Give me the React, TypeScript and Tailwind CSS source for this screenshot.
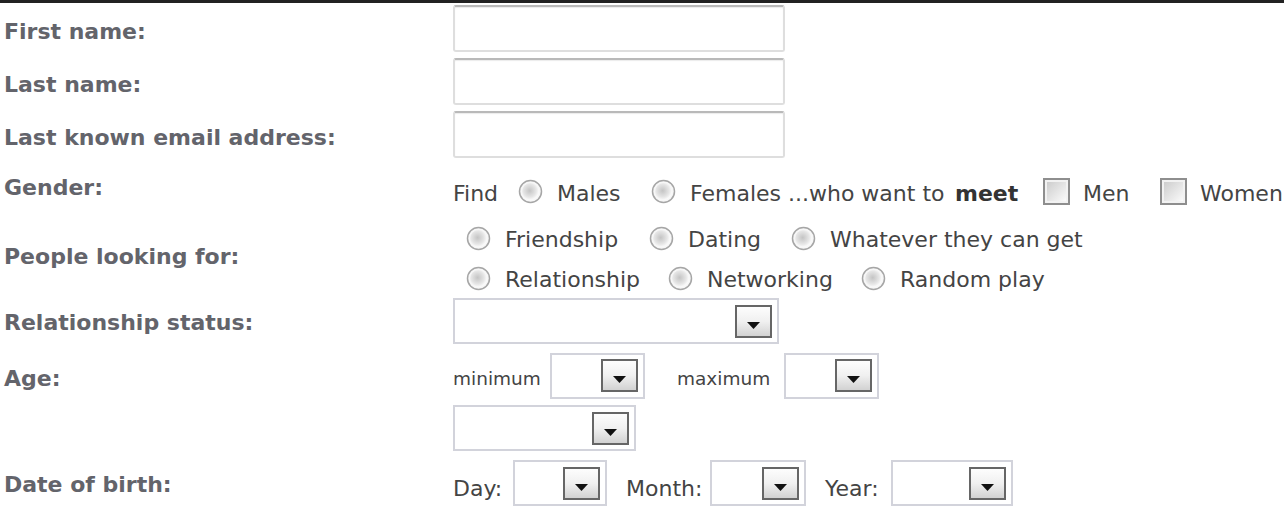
import React from "react";

function Radio({ id }: { id: string }) {
  return (
    <svg width="25" height="25" viewBox="0 0 25 25" className="shrink-0">
      <defs>
        <radialGradient id={id} cx="45%" cy="45%" r="55%">
          <stop offset="0" stopColor="#c4c4c4" />
          <stop offset="0.7" stopColor="#e6e6e6" />
          <stop offset="1" stopColor="#fbfbfb" />
        </radialGradient>
      </defs>
      <circle cx="12.5" cy="12.5" r="11" fill="#f7f7f7" stroke="#a6a6a6" strokeWidth="1.5" />
      <circle cx="12.5" cy="12.5" r="8.5" fill={`url(#${id})`} />
    </svg>
  );
}

function Check({ id }: { id: string }) {
  return (
    <svg width="27" height="27" viewBox="0 0 27 27" className="shrink-0">
      <defs>
        <linearGradient id={id} x1="0" y1="0" x2="1" y2="1">
          <stop offset="0" stopColor="#cdcdcd" />
          <stop offset="1" stopColor="#fafafa" />
        </linearGradient>
      </defs>
      <rect x="1" y="1" width="25" height="25" fill="#f2f2f2" stroke="#8e8e8e" strokeWidth="2" />
      <rect x="4" y="4" width="19" height="19" fill={`url(#${id})`} />
    </svg>
  );
}

function DropButton() {
  return (
    <div className="box-border flex h-[33px] w-[37px] shrink-0 items-end justify-center border-2 border-[#666] bg-linear-to-b from-[#fdfdfd] via-[#f0f0f0] to-[#d2d2d2] pb-[7px]">
      <svg width="13" height="7" viewBox="0 0 13 7">
        <polygon points="0,0 13,0 6.5,7" fill="#111" />
      </svg>
    </div>
  );
}

function Select({ className }: { className: string }) {
  return (
    <div
      className={
        "box-border flex h-[46px] shrink-0 items-center justify-end border-2 border-[#d2d3db] bg-white pr-[5px] " +
        className
      }
    >
      <DropButton />
    </div>
  );
}

function TextInput() {
  return (
    <div className="box-border h-[47px] w-[332px] rounded-[3px] border-2 border-[#dedede] border-t-[#b9b9b9] bg-white shadow-[inset_0_1px_1px_rgba(0,0,0,0.08)]" />
  );
}

function Label({ children, className = "" }: { children: React.ReactNode; className?: string }) {
  return (
    <div
      className={
        "w-[453px] shrink-0 pl-[4px] font-['DejaVu_Sans',sans-serif] text-[22px] font-bold whitespace-nowrap text-[#63646b] " +
        className
      }
    >
      {children}
    </div>
  );
}

export default function App() {
  return (
    <div className="min-h-[509px] w-[1284px] overflow-hidden bg-white font-['DejaVu_Sans',sans-serif] text-[22px] text-[#444]">
      <div className="h-[3px] bg-[#222]" />

      {/* First name */}
      <div className="mt-[2px] flex h-[47px] items-center">
        <Label className="pt-[5px]">First name:</Label>
        <TextInput />
      </div>

      {/* Last name */}
      <div className="mt-[6px] flex h-[47px] items-center">
        <Label className="pt-[5px]">Last name:</Label>
        <TextInput />
      </div>

      {/* Email */}
      <div className="mt-[6px] flex h-[47px] items-center">
        <Label className="pt-[5px]">Last known email address:</Label>
        <TextInput />
      </div>

      {/* Gender */}
      <div className="mt-[8px] flex h-[50px] items-center">
        <Label className="pb-[8px]">Gender:</Label>
        <div className="flex items-center whitespace-nowrap">
          <span className="w-[65px] pt-[5px]">Find</span>
          <Radio id="r1" />
          <span className="ml-[14px] w-[94px] pt-[5px]">Males</span>
          <Radio id="r2" />
          <span className="ml-[14px] w-[265px] pt-[5px]">Females ...who want to</span>
          <span className="w-[88px] pt-[5px] font-bold text-[#333]">meet</span>
          <Check id="c1" />
          <span className="ml-[13px] w-[77px] pt-[5px]">Men</span>
          <Check id="c2" />
          <span className="ml-[13px] pt-[5px]">Women</span>
        </div>
      </div>

      {/* People looking for */}
      <div className="mt-[2px] flex h-[80px] items-center">
        <Label className="pb-[4px]">People looking for:</Label>
        <div className="flex flex-col whitespace-nowrap">
          <div className="flex h-[40px] items-center pl-[13px]">
            <Radio id="r3" />
            <span className="ml-[14px] w-[144px] pt-[3px]">Friendship</span>
            <Radio id="r4" />
            <span className="ml-[14px] w-[103px] pt-[3px]">Dating</span>
            <Radio id="r5" />
            <span className="ml-[14px] pt-[3px]">Whatever they can get</span>
          </div>
          <div className="flex h-[40px] items-center pl-[13px]">
            <Radio id="r6" />
            <span className="ml-[14px] w-[163px] pt-[3px]">Relationship</span>
            <Radio id="r7" />
            <span className="ml-[14px] w-[154px] pt-[3px]">Networking</span>
            <Radio id="r8" />
            <span className="ml-[14px] pt-[3px]">Random play</span>
          </div>
        </div>
      </div>

      {/* Relationship status */}
      <div className="flex h-[46px] items-center">
        <Label className="pt-[3px]">Relationship status:</Label>
        <Select className="w-[326px]" />
      </div>

      {/* Age */}
      <div className="mt-[8px] flex h-[47px] items-center">
        <Label className="pt-[5px]">Age:</Label>
        <div className="flex items-center whitespace-nowrap">
          <span className="w-[97px] pt-[6px] text-[18.5px]">minimum</span>
          <Select className="w-[95px]" />
          <span className="ml-[32px] w-[107px] pt-[6px] text-[18.5px]">maximum</span>
          <Select className="w-[95px]" />
        </div>
      </div>

      {/* blank */}
      <div className="mt-[6px] flex h-[46px] items-center">
        <Label>{"\u00a0"}</Label>
        <Select className="w-[183px]" />
      </div>

      {/* Date of birth */}
      <div className="mt-[9px] flex h-[46px] items-center">
        <Label className="pt-[2px]">Date of birth:</Label>
        <div className="flex items-center whitespace-nowrap">
          <span className="w-[60px] pt-[10px]">Day:</span>
          <Select className="w-[94px]" />
          <span className="ml-[19px] w-[84px] pt-[10px]">Month:</span>
          <Select className="w-[96px]" />
          <span className="ml-[19px] w-[66px] pt-[10px]">Year:</span>
          <Select className="w-[122px]" />
        </div>
      </div>
    </div>
  );
}
